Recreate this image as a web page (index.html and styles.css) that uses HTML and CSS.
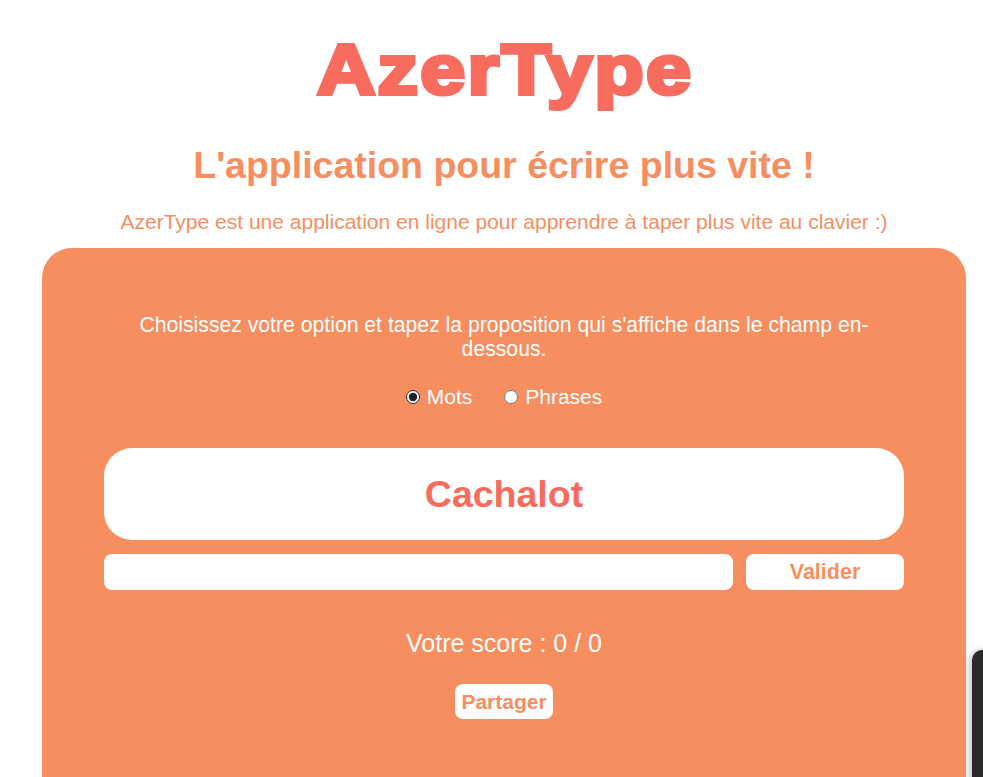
FILE: index.html
```html
<!DOCTYPE html>
<html lang="fr">
<head>
<meta charset="utf-8">
<title>AzerType</title>
<link rel="stylesheet" href="styles.css">
</head>
<body>
<div class="page">
  <h1 class="title"><span class="title-text">AzerType</span></h1>
  <h2 class="subtitle">L'application pour écrire plus vite !</h2>
  <p class="intro">AzerType est une application en ligne pour apprendre à taper plus vite au clavier :)</p>
  <section class="panel">
    <p class="instructions">Choisissez votre option et tapez la proposition qui s'affiche dans le champ en-dessous.</p>
    <div class="options">
      <label class="option"><input type="radio" name="mode" checked> Mots</label>
      <label class="option"><input type="radio" name="mode"> Phrases</label>
    </div>
    <div class="word">Cachalot</div>
    <div class="entry">
      <input class="field" type="text">
      <button class="btn btn-validate">Valider</button>
    </div>
    <p class="score">Votre score : 0 / 0</p>
    <button class="btn btn-share">Partager</button>
  </section>
</div>
<div class="edge"></div>
</body>
</html>
```
FILE: styles.css
```css
html, body {
  margin: 0;
  padding: 0;
  background: #ffffff;
  overflow: hidden;
  height: 777px;
}
body {
  font-family: "Liberation Sans", Arial, sans-serif;
}
.page {
  width: 924px;
  margin-left: 42px;
  text-align: center;
}
.title {
  margin: 35px 0 0;
  font-size: 70px;
  line-height: 70px;
  font-weight: 700;
  color: #F76C5E;
}
.title-text {
  display: inline-block;
  -webkit-text-stroke: 4px #F76C5E;
  letter-spacing: 2px;
  padding-left: 2px;
  transform: scaleX(1.155);
}
.subtitle {
  margin: 38px 0 0;
  font-size: 37.5px;
  line-height: 44px;
  font-weight: 700;
  color: #F68E5F;
}
.intro {
  margin: 23px 0 0;
  font-size: 21px;
  line-height: 24px;
  color: #F68E5F;
}
.panel {
  margin-top: 14px;
  background: #F68E5F;
  border-radius: 30px;
  padding: 65px 62px 0;
  height: 560px;
  box-sizing: border-box;
  display: flex;
  flex-direction: column;
  align-items: center;
  color: #ffffff;
}
.instructions {
  margin: 0;
  font-size: 21.2px;
  line-height: 24px;
  width: 800px;
}
.options {
  margin-top: 24px;
  display: flex;
  gap: 32px;
  font-size: 21px;
  line-height: 24px;
}
.option {
  display: flex;
  align-items: center;
  gap: 7px;
}
.option input {
  margin: 0;
  width: 14px;
  height: 14px;
  accent-color: #222;
}
.word {
  margin-top: 39px;
  width: 800px;
  height: 92px;
  background: #ffffff;
  border-radius: 28px;
  display: flex;
  align-items: center;
  justify-content: center;
  font-size: 37.5px;
  font-weight: 700;
  color: #F76C5E;
}
.entry {
  margin-top: 14px;
  width: 800px;
  display: flex;
  gap: 13px;
}
.field {
  flex: 1;
  height: 36px;
  border: none;
  border-radius: 8px;
  background: #ffffff;
  padding: 0 8px;
  box-sizing: border-box;
  outline: none;
}
.btn {
  border: none;
  background: #ffffff;
  color: #F68E5F;
  font-family: "Liberation Sans", Arial, sans-serif;
  font-weight: 700;
  font-size: 21px;
  border-radius: 8px;
  cursor: pointer;
}
.btn-validate {
  width: 158px;
  height: 36px;
  font-size: 21.5px;
}
.score {
  margin: 38px 0 0;
  font-size: 25px;
  line-height: 30px;
}
.btn-share {
  margin-top: 26px;
  height: 35px;
  padding: 0 6px;
}
.edge {
  position: absolute;
  left: 972px;
  top: 650px;
  width: 30px;
  height: 140px;
  background: #2a2a2a;
  border-radius: 10px 0 0 0;
  box-shadow: -2px 0 6px rgba(0,0,0,0.25);
}
```
